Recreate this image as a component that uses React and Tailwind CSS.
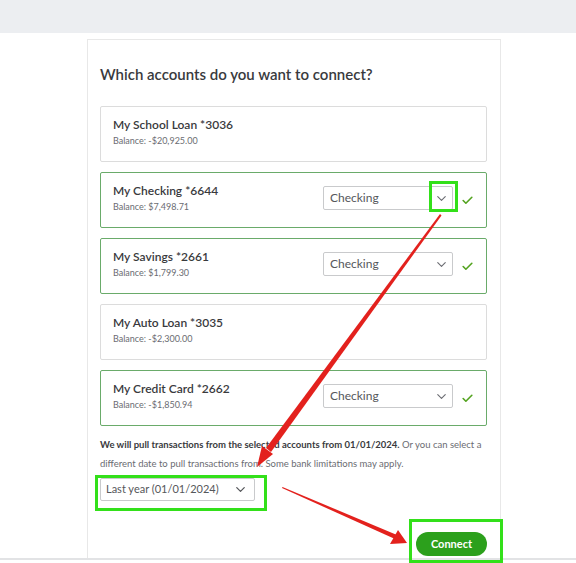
import React from 'react';
import { ChevronDown, Check } from 'lucide-react';

const accounts = [
  { name: 'My School Loan *3036', balance: 'Balance: -$20,925.00', selected: false },
  { name: 'My Checking *6644', balance: 'Balance: $7,498.71', selected: true },
  { name: 'My Savings *2661', balance: 'Balance: $1,799.30', selected: true },
  { name: 'My Auto Loan *3035', balance: 'Balance: -$2,300.00', selected: false },
  { name: 'My Credit Card *2662', balance: 'Balance: -$1,850.94', selected: true },
];

const AccountRow = ({ acc }) => (
  <div
    className={`h-[56px] rounded-[2px] border flex items-center pl-[12px] pr-[12px] ${
      acc.selected ? 'border-[#6aab6a]' : 'border-[#dcdcdc]'
    }`}
  >
    <div className="flex-1 flex flex-col pb-[5px]">
      <span className="text-[12px] leading-[16px] font-semibold text-[#393a3d]">{acc.name}</span>
      <span className="text-[9px] leading-[12px] mt-[2px] text-[#6b6c72]">{acc.balance}</span>
    </div>
    {acc.selected && (
      <div className="flex items-center">
        <div className="w-[130px] h-[24px] border border-[#c9cacc] rounded-[2px] flex items-center justify-between pl-[6px] pr-[3px] -mt-[4px]">
          <span className="text-[12px] text-[#55575b]">Checking</span>
          <ChevronDown size={15} strokeWidth={1.8} className="text-[#6b6c72]" />
        </div>
        <Check size={13} strokeWidth={3} className="text-[#53a31f] ml-[8px]" />
      </div>
    )}
  </div>
);

export default function App() {
  return (
    <div
      className="relative w-[576px] h-[563px] bg-white overflow-hidden"
      style={{ fontFamily: 'Lato, "Open Sans", sans-serif' }}
    >
      <div className="h-[33px] bg-[#eceef1]" />
      <div className="ml-[87px] mt-[6px] w-[414px] h-[519px] border border-b-0 border-[#e8e8e8] pl-[12px] pr-[13px] pt-[24px]">
        <h1 className="text-[15px] leading-[20px] font-semibold text-[#393a3d]">
          Which accounts do you want to connect?
        </h1>
        <div className="mt-[22px] flex flex-col gap-[10px]">
          {accounts.map((a) => (
            <AccountRow key={a.name} acc={a} />
          ))}
        </div>
        <p className="mt-[9px] text-[9.5px] leading-[19px] text-[#6b6c72]">
          <span className="font-bold text-[#393a3d]">
            We will pull transactions from the selected accounts from 01/01/2024.
          </span>{' '}
          Or you can select a different date to pull transactions from. Some bank limitations may apply.
        </p>
        <div className="mt-[5px] w-[155px] h-[23px] border border-[#c9cacc] rounded-[2px] flex items-center justify-between pl-[5px] pr-[6px]">
          <span className="text-[11px] text-[#55575b]">Last year (01/01/2024)</span>
          <ChevronDown size={15} strokeWidth={2} className="text-[#55575b]" />
        </div>
        <div className="flex justify-end mt-[31px]">
          <button className="w-[71px] h-[24px] rounded-full bg-[#2ca01c] text-white text-[11px] font-bold">
            Connect
          </button>
        </div>
      </div>
      <div className="h-[2px] bg-[#e2e3e5]" />

      {/* annotation boxes */}
      <div className="absolute left-[429px] top-[181px] w-[29px] h-[31px] border-[3px] border-[#33e01a]" />
      <div className="absolute left-[95px] top-[475px] w-[172px] h-[36px] border-[3px] border-[#33e01a]" />
      <div className="absolute left-[409px] top-[519px] w-[94px] h-[44px] border-[3px] border-[#33e01a]" />

      {/* annotation arrows */}
      <svg className="absolute left-0 top-0" width="576" height="563" viewBox="0 0 576 563">
        <polygon points="440,214 441.5,215.5 271,452 266,448" fill="#e3211d" />
        <polygon points="257,467 262,446 273,454" fill="#e3211d" />
        <polygon points="282,488 282.5,487 397,535 395,539" fill="#e3211d" />
        <polygon points="407,543 390,544 398,530" fill="#e3211d" />
      </svg>
    </div>
  );
}
